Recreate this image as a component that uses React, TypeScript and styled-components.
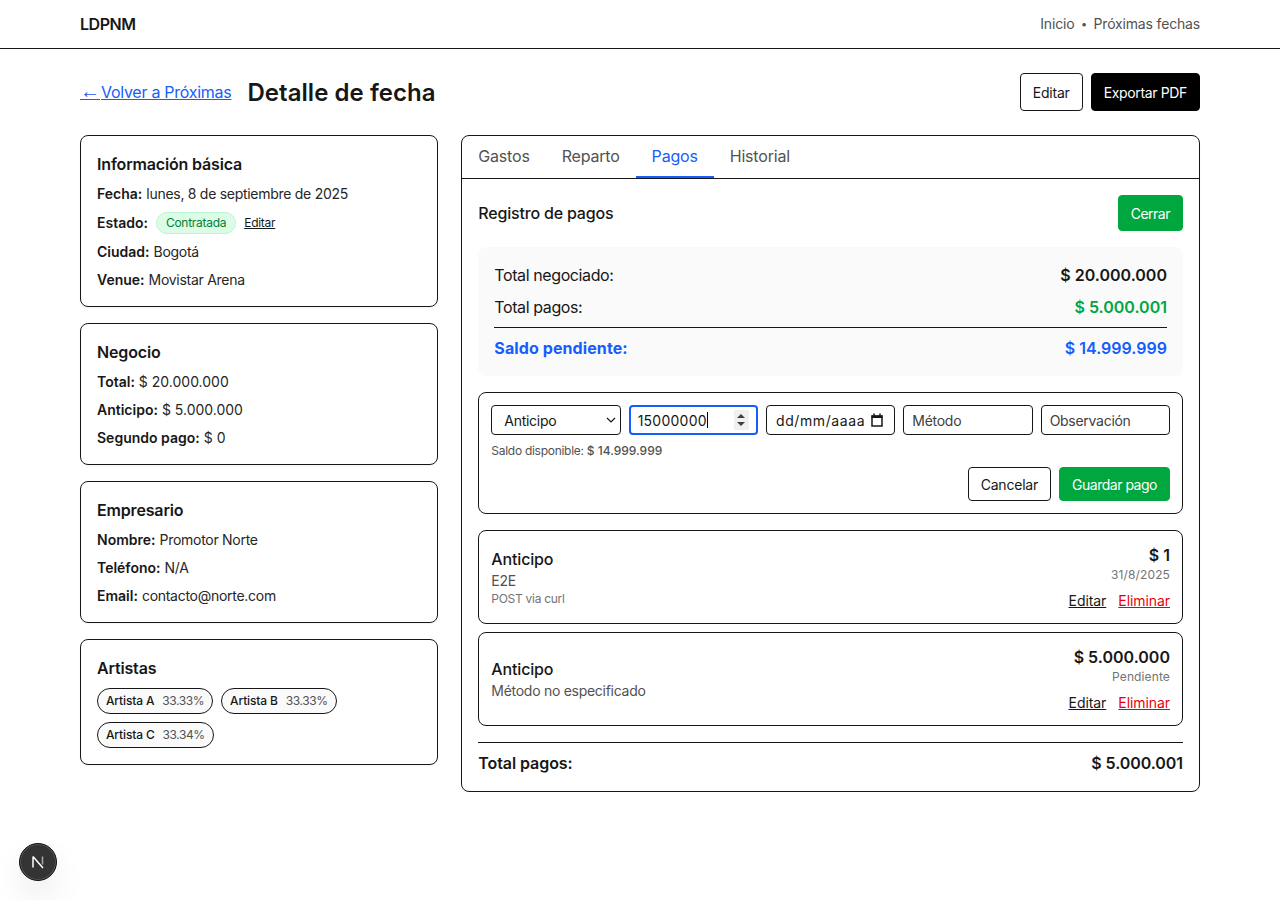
import { useEffect, useRef } from 'react';
import styled, { createGlobalStyle } from 'styled-components';

const GlobalStyle = createGlobalStyle`
  * { box-sizing: border-box; }
  html, body { margin: 0; padding: 0; background: #fff; }
  body {
    font-family: Inter, "Noto Sans", "Liberation Sans", sans-serif;
    color: #171717;
    font-size: 14px;
    letter-spacing: -0.02em;
  }
`;

const NavBar = styled.header`
  height: 49px;
  border-bottom: 1px solid #171717;
`;

const NavInner = styled.div`
  max-width: 1120px;
  height: 48px;
  margin: 0 auto;
  display: flex;
  align-items: center;
  justify-content: space-between;
`;

const Brand = styled.div`
  font-size: 16px;
  font-weight: 600;
  letter-spacing: -0.03em;
  margin-bottom: 1px;
`;

const NavLinks = styled.nav`
  display: flex;
  align-items: center;
  gap: 6.5px;
  font-size: 14px;
  letter-spacing: -0.012em;
  color: #525252;
  margin-bottom: 1px;
`;

const NavDot = styled.span`
  font-size: 11px;
`;

const Main = styled.main`
  max-width: 1120px;
  margin: 0 auto;
  padding-top: 24px;
`;

const TitleRow = styled.div`
  display: flex;
  align-items: center;
  justify-content: space-between;
  height: 38px;
  margin-bottom: 24px;
`;

const TitleLeft = styled.div`
  display: flex;
  align-items: center;
  gap: 16px;
`;

const BackLink = styled.a`
  margin-bottom: 2px;
  font-size: 16px;
  color: #155dfc;
  text-decoration: underline;
  letter-spacing: -0.017em;
`;

const BackArrow = styled.span`
  font-family: "Liberation Sans", sans-serif;
  font-size: 20px;
  line-height: 1;
  letter-spacing: 0;
  margin-right: 1px;
`;

const PageTitle = styled.h1`
  margin: 2px 0 0;
  font-size: 24px;
  line-height: 32px;
  font-weight: 600;
  letter-spacing: 0.05px;
`;

const ButtonRow = styled.div`
  display: flex;
  gap: 8px;
`;

const Button = styled.button<{ $variant?: 'outline' | 'dark' | 'green' }>`
  height: ${({ $variant }) => ($variant === 'green' ? '36px' : '38px')};
  padding: 0 12px;
  border-radius: 4px;
  font-family: inherit;
  font-size: 14px;
  letter-spacing: ${({ $variant }) => ($variant === 'green' ? '-0.035em' : $variant === 'dark' ? '-0.025em' : '-0.015em')};
  cursor: pointer;
  border: 1px solid ${({ $variant }) => ($variant === 'dark' ? '#000' : $variant === 'green' ? '#00a63e' : '#171717')};
  background: ${({ $variant }) => ($variant === 'dark' ? '#000' : $variant === 'green' ? '#00a63e' : '#fff')};
  color: ${({ $variant }) => ($variant === 'dark' || $variant === 'green' ? '#fff' : '#171717')};
`;

const Columns = styled.div`
  display: grid;
  grid-template-columns: 358px 738.67px;
  gap: 23.33px;
  align-items: start;
`;

const Sidebar = styled.aside`
  display: flex;
  flex-direction: column;
  gap: 16px;
`;

const InfoCard = styled.section`
  border: 1px solid #171717;
  border-radius: 8px;
  padding: 16px;
  box-shadow: 0 1px 2px rgba(0, 0, 0, 0.05);
`;

const CardTitle = styled.h2`
  margin: 0 0 8px;
  font-size: 16px;
  line-height: 24px;
  font-weight: 600;
  letter-spacing: -0.01em;
`;

const InfoLines = styled.div`
  display: flex;
  flex-direction: column;
  gap: 8px;
`;

const InfoLine = styled.div`
  display: flex;
  align-items: center;
  gap: 4px;
  min-height: 20px;
  font-size: 14px;
  line-height: 20px;
  color: #262626;
`;

const StatusLine = styled(InfoLine)`
  gap: 8px;
  height: 22px;
`;

const Label = styled.strong`
  font-weight: 600;
  color: #171717;
  letter-spacing: 0;
`;

const InfoValue = styled.span<{ $numeric?: boolean }>`
  letter-spacing: ${({ $numeric }) => ($numeric ? '0' : 'inherit')};
`;

const StatusBadge = styled.span`
  display: inline-flex;
  align-items: center;
  height: 22px;
  padding: 0 9px;
  border-radius: 999px;
  border: 1px solid #b9f8cf;
  background: #dcfce7;
  color: #008236;
  font-size: 12px;
`;

const SmallLink = styled.a`
  font-size: 12px;
  color: #171717;
  text-decoration: underline;
`;

const ArtistList = styled.div`
  display: flex;
  flex-wrap: wrap;
  gap: 8px;
`;

const ArtistChip = styled.span`
  display: inline-flex;
  align-items: center;
  gap: 8px;
  height: 26px;
  padding: 0 8px 1px;
  border-radius: 999px;
  border: 1px solid #171717;
  background: #fafafa;
  font-size: 12px;
  font-weight: 500;
  letter-spacing: -0.012em;
`;

const ArtistShare = styled.span`
  color: #525252;
  font-weight: 400;
  letter-spacing: -0.035em;
`;

const Panel = styled.section`
  border: 1px solid #171717;
  border-radius: 8px;
  box-shadow: 0 1px 2px rgba(0, 0, 0, 0.05);
`;

const TabBar = styled.div`
  display: flex;
  height: 43px;
  border-bottom: 1px solid #171717;
`;

const Tab = styled.button<{ $active?: boolean }>`
  height: 42px;
  padding: 0 16px;
  border: none;
  border-bottom: 2px solid ${({ $active }) => ($active ? '#155dfc' : 'transparent')};
  background: none;
  font-family: inherit;
  font-size: 16px;
  letter-spacing: -0.012em;
  color: ${({ $active }) => ($active ? '#155dfc' : '#525252')};
  cursor: pointer;
`;

const PanelBody = styled.div`
  padding: 16px;
`;

const SectionHead = styled.div`
  display: flex;
  align-items: center;
  justify-content: space-between;
  margin-bottom: 16px;
`;

const SectionTitle = styled.h3`
  margin: 0;
  font-size: 16px;
  font-weight: 500;
  letter-spacing: -0.012em;
`;

const Summary = styled.div`
  background: #fafafa;
  border-radius: 8px;
  padding: 16px;
  margin-bottom: 16px;
`;

const SummaryRow = styled.div`
  display: flex;
  justify-content: space-between;
  align-items: center;
  height: 24px;
  font-size: 16px;
  letter-spacing: -0.025em;
  margin-bottom: 8px;
`;

const Amount = styled.span<{ $tone?: 'green' | 'blue' }>`
  font-weight: 600;
  letter-spacing: 0;
  color: ${({ $tone }) => ($tone === 'green' ? '#00a63e' : $tone === 'blue' ? '#155dfc' : '#171717')};
`;

const SummaryDivider = styled.hr`
  margin: 0 0 8px;
  border: none;
  border-top: 1px solid #171717;
`;

const BalanceRow = styled(SummaryRow)`
  margin: 8px 0 0;
  color: #155dfc;
  font-weight: 700;
`;

const BalanceLabel = styled.span`
  letter-spacing: 0.1px;
`;

const FormCard = styled.form`
  border: 1px solid #171717;
  border-radius: 8px;
  padding: 12px;
  margin-bottom: 16px;
`;

const FieldGrid = styled.div`
  display: grid;
  grid-template-columns: repeat(5, 1fr);
  gap: 8px;
`;

const fieldCss = `
  width: 100%;
  height: 30px;
  border: 1px solid #171717;
  border-radius: 4px;
  background: #fff;
  font-family: inherit;
  font-size: 14px;
  letter-spacing: -0.02em;
  color: #171717;
  padding: 0 8px;
`;

const SelectField = styled.select`
  ${fieldCss}
  appearance: none;
  padding-left: 12px;
  background-image: url("data:image/svg+xml,%3Csvg xmlns='http://www.w3.org/2000/svg' width='10' height='6' viewBox='0 0 10 6'%3E%3Cpath d='M1 1l4 4 4-4' fill='none' stroke='%23171717' stroke-width='1.2'/%3E%3C/svg%3E");
  background-repeat: no-repeat;
  background-position: right 4px center;
`;

const AmountWrap = styled.div`
  position: relative;
`;

const AmountField = styled.input`
  ${fieldCss}
  letter-spacing: 0.25px;
  caret-color: transparent;
  appearance: textfield;
  &::-webkit-inner-spin-button,
  &::-webkit-outer-spin-button {
    appearance: none;
    margin: 0;
  }
  &:focus {
    outline: none;
    border: 2px solid #155dfc;
    padding: 0 7px;
  }
`;

const FakeCaret = styled.span`
  position: absolute;
  left: 78px;
  top: 7px;
  width: 1px;
  height: 16px;
  background: #000;
`;

const SpinBox = styled.span`
  position: absolute;
  left: 105px;
  top: 5px;
  width: 15px;
  height: 20px;
  background: #f0f0f0;
  display: flex;
  flex-direction: column;
  align-items: center;
  justify-content: center;
  gap: 4px;
`;

const SpinArrow = styled.span<{ $down?: boolean }>`
  width: 0;
  height: 0;
  border-left: 4px solid transparent;
  border-right: 4px solid transparent;
  ${({ $down }) => ($down ? 'border-top: 4px solid #3f3f3f;' : 'border-bottom: 4px solid #3f3f3f;')}
`;

const TextField = styled.input`
  ${fieldCss}
  &::placeholder {
    color: #404040;
    opacity: 1;
  }
`;

const DateField = styled.div`
  ${fieldCss}
  display: flex;
  align-items: center;
  justify-content: space-between;
  padding: 0 11px 0 9px;
  letter-spacing: 0.6px;
`;

const HelpText = styled.div`
  margin-top: 8px;
  font-size: 12px;
  line-height: 16px;
  color: #525252;
`;

const HelpAmount = styled.span`
  font-weight: 500;
  letter-spacing: 0;
`;

const FormActions = styled.div`
  display: flex;
  justify-content: flex-end;
  gap: 8px;
  margin-top: 8px;
`;

const FormButton = styled(Button)`
  height: 34px;
`;

const PaymentCard = styled.article`
  display: flex;
  justify-content: space-between;
  align-items: center;
  border: 1px solid #171717;
  border-radius: 8px;
  padding: 12px;
  margin-bottom: 8px;
`;

const PaymentInfo = styled.div`
  display: flex;
  flex-direction: column;
`;

const PaymentType = styled.div`
  font-size: 16px;
  line-height: 24px;
  font-weight: 500;
  letter-spacing: -0.01em;
`;

const PaymentMethod = styled.div`
  font-size: 14px;
  line-height: 20px;
  color: #525252;
`;

const PaymentNote = styled.div`
  font-size: 12px;
  line-height: 16px;
  color: #737373;
`;

const PaymentSide = styled.div`
  display: flex;
  flex-direction: column;
  align-items: flex-end;
`;

const PaymentAmount = styled.div`
  font-size: 16px;
  line-height: 24px;
  font-weight: 600;
  letter-spacing: 0;
`;

const PaymentDate = styled.div`
  font-size: 12px;
  line-height: 16px;
  color: #737373;
  letter-spacing: 0.01em;
`;

const PaymentLinks = styled.div`
  display: flex;
  gap: 12px;
  margin-top: 8px;
  font-size: 14px;
  line-height: 20px;
  letter-spacing: -0.005em;
`;

const ActionLink = styled.a<{ $danger?: boolean }>`
  text-decoration: underline;
  color: ${({ $danger }) => ($danger ? '#e7000b' : '#171717')};
`;

const TotalRow = styled.div`
  display: flex;
  justify-content: space-between;
  align-items: center;
  margin-top: 16px;
  padding-top: 8px;
  border-top: 1px solid #171717;
  font-size: 16px;
  line-height: 24px;
  font-weight: 600;
  letter-spacing: -0.005em;
`;

const DevBadge = styled.div`
  position: fixed;
  left: 19px;
  bottom: 19px;
  width: 38px;
  height: 38px;
  border-radius: 50%;
  background: #333;
  border: 1px solid #111;
  box-shadow: 0 0 0 1px #555 inset, 0 16px 32px rgba(0, 0, 0, 0.08);
  display: flex;
  align-items: center;
  justify-content: center;
`;

const artists = [
  { name: 'Artista A', share: '33.33%' },
  { name: 'Artista B', share: '33.33%' },
  { name: 'Artista C', share: '33.34%' },
];

const sidebarCards = [
  {
    title: 'Negocio',
    numeric: true,
    lines: [
      ['Total:', '$ 20.000.000'],
      ['Anticipo:', '$ 5.000.000'],
      ['Segundo pago:', '$ 0'],
    ],
  },
  {
    title: 'Empresario',
    numeric: false,
    lines: [
      ['Nombre:', 'Promotor Norte'],
      ['Teléfono:', 'N/A'],
      ['Email:', 'contacto@norte.com'],
    ],
  },
];

const tabs = ['Gastos', 'Reparto', 'Pagos', 'Historial'];

export default function App() {
  const amountRef = useRef<HTMLInputElement>(null);

  useEffect(() => {
    amountRef.current?.focus();
  }, []);

  return (
    <>
      <GlobalStyle />
      <NavBar>
        <NavInner>
          <Brand>LDPNM</Brand>
          <NavLinks>
            <span>Inicio</span>
            <NavDot>•</NavDot>
            <span>Próximas fechas</span>
          </NavLinks>
        </NavInner>
      </NavBar>
      <Main>
        <TitleRow>
          <TitleLeft>
            <BackLink href="#"><BackArrow>←</BackArrow>Volver a Próximas</BackLink>
            <PageTitle>Detalle de fecha</PageTitle>
          </TitleLeft>
          <ButtonRow>
            <Button $variant="outline">Editar</Button>
            <Button $variant="dark">Exportar PDF</Button>
          </ButtonRow>
        </TitleRow>
        <Columns>
          <Sidebar>
            <InfoCard>
              <CardTitle>Información básica</CardTitle>
              <InfoLines>
                <InfoLine>
                  <Label>Fecha:</Label> lunes, 8 de septiembre de 2025
                </InfoLine>
                <StatusLine>
                  <Label>Estado:</Label>
                  <StatusBadge>Contratada</StatusBadge>
                  <SmallLink href="#">Editar</SmallLink>
                </StatusLine>
                <InfoLine>
                  <Label>Ciudad:</Label> Bogotá
                </InfoLine>
                <InfoLine>
                  <Label>Venue:</Label> Movistar Arena
                </InfoLine>
              </InfoLines>
            </InfoCard>
            {sidebarCards.map((card) => (
              <InfoCard key={card.title}>
                <CardTitle>{card.title}</CardTitle>
                <InfoLines>
                  {card.lines.map(([label, value]) => (
                    <InfoLine key={label}>
                      <Label>{label}</Label>
                      <InfoValue $numeric={card.numeric}>{value}</InfoValue>
                    </InfoLine>
                  ))}
                </InfoLines>
              </InfoCard>
            ))}
            <InfoCard>
              <CardTitle>Artistas</CardTitle>
              <ArtistList>
                {artists.map((artist) => (
                  <ArtistChip key={artist.name}>
                    {artist.name}
                    <ArtistShare>{artist.share}</ArtistShare>
                  </ArtistChip>
                ))}
              </ArtistList>
            </InfoCard>
          </Sidebar>
          <Panel>
            <TabBar>
              {tabs.map((tab) => (
                <Tab key={tab} $active={tab === 'Pagos'}>
                  {tab}
                </Tab>
              ))}
            </TabBar>
            <PanelBody>
              <SectionHead>
                <SectionTitle>Registro de pagos</SectionTitle>
                <Button $variant="green">Cerrar</Button>
              </SectionHead>
              <Summary>
                <SummaryRow>
                  <span>Total negociado:</span>
                  <Amount>$ 20.000.000</Amount>
                </SummaryRow>
                <SummaryRow>
                  <span>Total pagos:</span>
                  <Amount $tone="green">$ 5.000.001</Amount>
                </SummaryRow>
                <SummaryDivider />
                <BalanceRow>
                  <BalanceLabel>Saldo pendiente:</BalanceLabel>
                  <Amount $tone="blue">$ 14.999.999</Amount>
                </BalanceRow>
              </Summary>
              <FormCard>
                <FieldGrid>
                  <SelectField defaultValue="Anticipo">
                    <option>Anticipo</option>
                    <option>Segundo pago</option>
                  </SelectField>
                  <AmountWrap>
                    <AmountField ref={amountRef} type="number" defaultValue="15000000" />
                    <FakeCaret />
                    <SpinBox>
                      <SpinArrow />
                      <SpinArrow $down />
                    </SpinBox>
                  </AmountWrap>
                  <DateField>
                    <span>dd/mm/aaaa</span>
                    <svg width="12" height="14" viewBox="0 0 12 14" fill="none">
                      <path d="M1 3h10v10H1z" stroke="#171717" strokeWidth="1.5" />
                      <path d="M0.5 2.5h11v2.5h-11z" fill="#171717" />
                      <path d="M3 0.5v2M9 0.5v2" stroke="#171717" strokeWidth="1.5" />
                    </svg>
                  </DateField>
                  <TextField placeholder="Método" />
                  <TextField placeholder="Observación" />
                </FieldGrid>
                <HelpText>
                  Saldo disponible: <HelpAmount>$ 14.999.999</HelpAmount>
                </HelpText>
                <FormActions>
                  <FormButton type="button" $variant="outline">Cancelar</FormButton>
                  <FormButton type="button" $variant="green">Guardar pago</FormButton>
                </FormActions>
              </FormCard>
              <PaymentCard>
                <PaymentInfo>
                  <PaymentType>Anticipo</PaymentType>
                  <PaymentMethod>E2E</PaymentMethod>
                  <PaymentNote>POST via curl</PaymentNote>
                </PaymentInfo>
                <PaymentSide>
                  <PaymentAmount>$ 1</PaymentAmount>
                  <PaymentDate>31/8/2025</PaymentDate>
                  <PaymentLinks>
                    <ActionLink href="#">Editar</ActionLink>
                    <ActionLink href="#" $danger>Eliminar</ActionLink>
                  </PaymentLinks>
                </PaymentSide>
              </PaymentCard>
              <PaymentCard>
                <PaymentInfo>
                  <PaymentType>Anticipo</PaymentType>
                  <PaymentMethod>Método no especificado</PaymentMethod>
                </PaymentInfo>
                <PaymentSide>
                  <PaymentAmount>$ 5.000.000</PaymentAmount>
                  <PaymentDate>Pendiente</PaymentDate>
                  <PaymentLinks>
                    <ActionLink href="#">Editar</ActionLink>
                    <ActionLink href="#" $danger>Eliminar</ActionLink>
                  </PaymentLinks>
                </PaymentSide>
              </PaymentCard>
              <TotalRow>
                <span>Total pagos:</span>
                <span>$ 5.000.001</span>
              </TotalRow>
            </PanelBody>
          </Panel>
        </Columns>
      </Main>
      <DevBadge>
        <svg width="16" height="16" viewBox="0 0 16 16" fill="none">
          <path d="M3 2.5v11M3 2.5l10 11.5" stroke="#fff" strokeWidth="1.5" />
          <path d="M12.5 2.5v8" stroke="#aaa" strokeWidth="1.5" />
        </svg>
      </DevBadge>
    </>
  );
}
